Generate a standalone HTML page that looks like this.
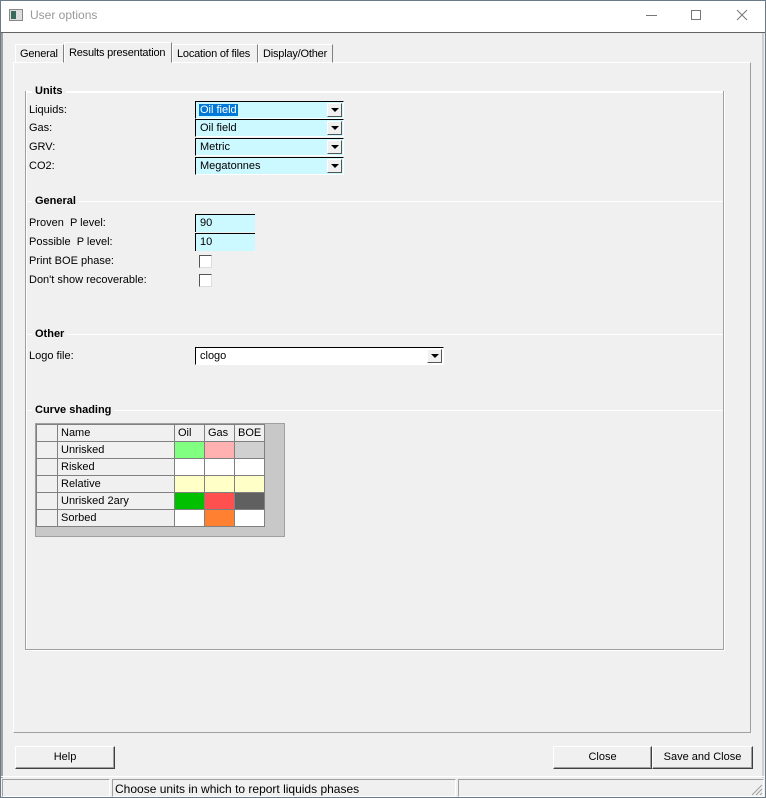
<!DOCTYPE html>
<html><head><meta charset="utf-8"><style>
*{box-sizing:border-box;margin:0;padding:0}
body{width:766px;height:798px;background:#f0f0f0;font-family:"Liberation Sans",Arial,sans-serif;font-size:11px;color:#000;position:relative;overflow:hidden}
.a{position:absolute}
.lbl{position:absolute;left:29px;font-size:11px}
.combo{position:absolute;left:195px;width:149px;height:18px;background:#ccf8ff;border-top:1px solid #000;border-left:1px solid #000;border-right:1px solid #fff;border-bottom:1px solid #fff}
.combo span{position:absolute;left:4px;top:2px}
.dd{position:absolute;right:1px;top:1px;width:15px;height:14px;background:#f0f0f0;border:1px solid;border-color:#fff #555 #555 #fff}
.dd:after{content:"";position:absolute;left:3px;top:4px;border-left:4px solid transparent;border-right:4px solid transparent;border-top:4px solid #000}
.edit{position:absolute;left:195px;width:60px;height:18px;background:#ccf8ff;border-top:1px solid #000;border-left:1px solid #000}
.edit span{position:absolute;left:4px;top:2px}
.chk{position:absolute;left:199px;width:13px;height:13px;background:#fff;border-top:1px solid #555;border-left:1px solid #555;border-right:1px solid #ddd;border-bottom:1px solid #ddd}
.sec{position:absolute;left:26px;width:697px;height:1px;background:#a0a0a0;border-bottom:1px solid #fff}
.sect{position:absolute;left:32px;font-weight:bold;background:#f0f0f0;padding:0 3px;font-size:11px}
.btn{position:absolute;top:746px;height:23px;background:#f0f0f0;border:1px solid;border-color:#fff #404040 #404040 #fff;box-shadow:inset -1px -1px 0 #a0a0a0;text-align:center;line-height:20px;font-size:11px}
.tab{position:absolute;height:19px;border:1px solid;border-color:#fff #808080 transparent #fff;padding:3px 0 0 4px;font-size:11px;white-space:nowrap;letter-spacing:-0.2px;overflow:hidden}
table{border-collapse:collapse;position:absolute;left:36px;top:424px}
td{border:1px solid #808080;height:17px;padding:0 3px;font-size:11px;background:#f0f0f0;line-height:14px}
</style></head><body>
<div class="a" style="left:0;top:0;width:766px;height:798px;border:1px solid #6b7a89"></div>
<div class="a" style="left:1px;top:1px;width:764px;height:31px;background:#fff"></div>
<div class="a" style="left:9px;top:9px;width:14px;height:12px;border:1px solid #888;background:#ddd"><div class="a" style="left:1px;top:1px;width:5px;height:8px;background:#3a6b5a"></div></div>
<div class="a" style="left:30px;top:8px;font-size:12px;color:#999">User options</div>
<div class="a" style="left:646px;top:15px;width:11px;height:1px;background:#777"></div>
<div class="a" style="left:691px;top:10px;width:10px;height:10px;border:1px solid #777"></div>
<svg class="a" style="left:736px;top:9px" width="12" height="12"><path d="M1 1L11 11M11 1L1 11" stroke="#777" stroke-width="1"/></svg>
<div class="a" style="left:1px;top:32px;width:764px;height:1px;background:#646464"></div>
<div class="a" style="left:1px;top:33px;width:2px;height:745px;background:#a0a0a0"></div>
<div class="a" style="left:762px;top:33px;width:2px;height:745px;background:#d0d0d0"></div>
<div class="a" style="left:13px;top:62px;width:738px;height:671px;border:1px solid;border-color:#fff #a0a0a0 #a0a0a0 #fff"></div>
<div class="tab" style="left:15px;top:44px;width:49px">General</div>
<div class="tab" style="left:64px;top:42px;width:108px;height:21px;background:#f0f0f0;padding-top:4px">Results presentation</div>
<div class="tab" style="left:172px;top:44px;width:86px">Location of files</div>
<div class="tab" style="left:258px;top:44px;width:75px">Display/Other</div>
<div class="a" style="left:25px;top:91px;width:699px;height:559px;border:1px solid #a0a0a0;box-shadow:1px 1px 0 #fff, inset 1px 1px 0 #fff"></div>
<div class="sec" style="top:91px"></div><div class="sect" style="top:85px">Units</div>
<div class="lbl" style="top:104px">Liquids:</div>
<div class="lbl" style="top:122px">Gas:</div>
<div class="lbl" style="top:141px">GRV:</div>
<div class="lbl" style="top:160px">CO2:</div>
<div class="combo" style="top:101px"><span style="background:#0078d7;color:#fff;left:3px;padding:0 1px">Oil field</span><div class="dd"></div></div>
<div class="combo" style="top:119px"><span>Oil field</span><div class="dd"></div></div>
<div class="combo" style="top:138px"><span>Metric</span><div class="dd"></div></div>
<div class="combo" style="top:157px"><span>Megatonnes</span><div class="dd"></div></div>
<div class="sec" style="top:201px"></div><div class="sect" style="top:195px">General</div>
<div class="lbl" style="top:217px">Proven&nbsp; P level:</div>
<div class="lbl" style="top:236px">Possible&nbsp; P level:</div>
<div class="lbl" style="top:255px">Print BOE phase:</div>
<div class="lbl" style="top:274px">Don't show recoverable:</div>
<div class="edit" style="top:214px"><span>90</span></div>
<div class="edit" style="top:233px"><span>10</span></div>
<div class="chk" style="top:255px"></div>
<div class="chk" style="top:274px"></div>
<div class="sec" style="top:334px"></div><div class="sect" style="top:328px">Other</div>
<div class="lbl" style="top:350px">Logo file:</div>
<div class="combo" style="top:347px;width:249px;background:#fff"><span>clogo</span><div class="dd"></div></div>
<div class="sec" style="top:410px"></div><div class="sect" style="top:404px">Curve shading</div>
<div class="a" style="left:35px;top:423px;width:250px;height:114px;background:#c8c8c8;border:1px solid #a0a0a0"></div>
<table>
<tr><td style="width:21px"></td><td style="width:117px">Name</td><td style="width:30px">Oil</td><td style="width:30px">Gas</td><td style="width:30px">BOE</td></tr>
<tr><td></td><td>Unrisked</td><td style="background:#80ff80"></td><td style="background:#ffb0b0"></td><td style="background:#d0d0d0"></td></tr>
<tr><td></td><td>Risked</td><td style="background:#fff"></td><td style="background:#fff"></td><td style="background:#fff"></td></tr>
<tr><td></td><td>Relative</td><td style="background:#ffffc8"></td><td style="background:#ffffc8"></td><td style="background:#ffffc8"></td></tr>
<tr><td></td><td>Unrisked 2ary</td><td style="background:#00c000"></td><td style="background:#ff5050"></td><td style="background:#606060"></td></tr>
<tr><td></td><td>Sorbed</td><td style="background:#fff"></td><td style="background:#ff8030"></td><td style="background:#fff"></td></tr>
</table>
<div class="btn" style="left:15px;width:100px">Help</div>
<div class="btn" style="left:553px;width:99px">Close</div>
<div class="btn" style="left:652px;width:101px">Save and Close</div>
<div class="a" style="left:1px;top:776px;width:764px;height:1px;background:#fff"></div>
<div class="a" style="left:2px;top:779px;width:108px;height:18px;border:1px solid;border-color:#a0a0a0 #fff #fff #a0a0a0"></div>
<div class="a" style="left:112px;top:779px;width:344px;height:18px;border:1px solid;border-color:#a0a0a0 #fff #fff #a0a0a0;font-size:12px;padding:2px 0 0 2px;white-space:nowrap">Choose units in which to report liquids phases</div>
<div class="a" style="left:458px;top:779px;width:306px;height:18px;border:1px solid;border-color:#a0a0a0 #fff #fff #a0a0a0"></div>
<svg class="a" style="left:751px;top:784px" width="12" height="12"><path d="M11 1L1 11M11 5L5 11M11 9L9 11" stroke="#a0a0a0"/></svg>
</body></html>
